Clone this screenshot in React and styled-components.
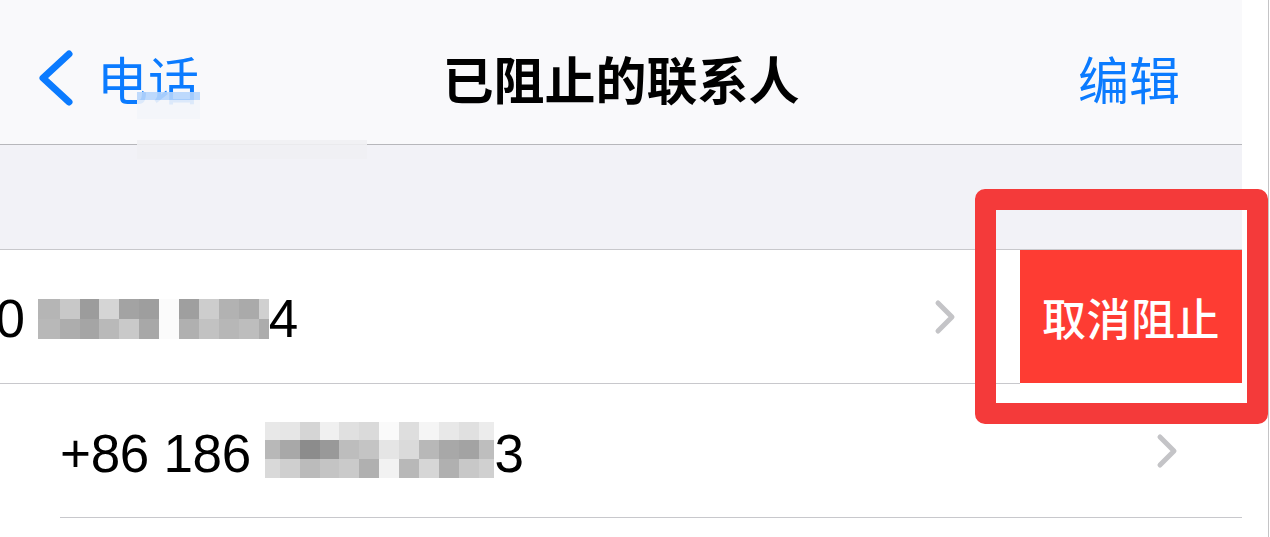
import React from "react";
import styled, { createGlobalStyle } from "styled-components";

const CJK = `"Noto Sans CJK SC", "Noto Sans", sans-serif`;

const GlobalStyle = createGlobalStyle`
  html, body {
    margin: 0;
    padding: 0;
    background: #fff;
  }
  body {
    font-family: "Liberation Sans", "Noto Sans CJK SC", sans-serif;
  }
`;

// pixelated (redacted) digits, copied tile by tile
const mosaicOne = {
  cols: "22px 20px 19px 20px 20px 20px 20px 20px 20px 20px 20px 10px",
  rows: "20px 20px",
  tiles: [
    "#b5b5b5", "#c8c8c8", "#9c9c9c", "#d5d5d5", "#a3a3a3", "#9e9e9e",
    "#fbfbfb", "#9f9f9f", "#cdcdcd", "#b2b2b2", "#aaaaaa", "#d0d0d0",
    "#b8b8b8", "#adadad", "#a5a5a5", "#b9b9b9", "#c9c9c9", "#a8a8a8",
    "#fbfbfb", "#b0b0b0", "#c2c2c2", "#b7b7b7", "#bdbdbd", "#acacac",
  ],
};

const mosaicTwo = {
  cols: "15px 20px 20px 19px 20px 20px 20px 20px 20px 20px 20px 15px",
  rows: "18px 19px 19px",
  tiles: [
    "#e8e8e8", "#e6e6e6", "#d5d5d5", "#f0f0f0", "#e0e0e0", "#dadada",
    "#fafafa", "#dedede", "#f5f5f5", "#e8e8e8", "#e0e0e0", "#ececec",
    "#b8b8b8", "#a8a8a8", "#8c8c8c", "#999999", "#bdbdbd", "#c4c4c4",
    "#e5e5e5", "#dadada", "#b8b8b8", "#a8a8a8", "#a3a3a3", "#bebebe",
    "#d9d9d9", "#cfcfcf", "#bbbbbb", "#c4c4c4", "#cacaca", "#b0b0b0",
    "#f2f2f2", "#b8b8b8", "#d6d6d6", "#b0b0b0", "#c8c8c8", "#d0d0d0",
  ],
};

const BackChevron = () => (
  <svg width="36" height="56" viewBox="0 0 36 56">
    <polyline
      points="31,4 5,28 31,52"
      fill="none"
      stroke="#0b7bff"
      strokeWidth="7"
      strokeLinecap="round"
      strokeLinejoin="round"
    />
  </svg>
);

const RowChevron = () => (
  <svg width="22" height="36" viewBox="0 0 22 36">
    <polyline
      points="4,4 18,18 4,32"
      fill="none"
      stroke="#c4c4c7"
      strokeWidth="5"
      strokeLinecap="round"
      strokeLinejoin="round"
    />
  </svg>
);

const Mosaic = ({ data, drop }) => (
  <MosaicBox $drop={drop}>
    <MosaicGrid $cols={data.cols} $rows={data.rows}>
      {data.tiles.map((c, i) => (
        <Tile key={i} $c={c} />
      ))}
    </MosaicGrid>
  </MosaicBox>
);

const App = () => {
  return (
    <Page>
      <GlobalStyle />
      <Phone>
        <NavBar>
          <Back>
            <BackChevron />
            <NavLink>电话</NavLink>
          </Back>
          <Title>已阻止的联系人</Title>
          <Edit>编辑</Edit>
        </NavBar>
        <SectionGap />
        <Row>
          <RowContent $swipe>
            <RowInner>
              <Number $spacing={-1}>
                +86 130 <Mosaic data={mosaicOne} drop={-2} />4
              </Number>
              <RowChevron />
            </RowInner>
          </RowContent>
          <UnblockButton>取消阻止</UnblockButton>
        </Row>
        <Row>
          <RowContent>
            <RowInner>
              <Number $spacing={-0.3}>
                +86 186 <Mosaic data={mosaicTwo} drop={-6} />3
              </Number>
              <RowChevron />
            </RowInner>
          </RowContent>
        </Row>
        <Smudge $x={137} $y={92} $w={63} $h={8} $c="#b6d5fc" />
        <Smudge $x={137} $y={100} $w={63} $h={19} $c="#f3f5fa" />
        <Smudge $x={137} $y={140} $w={230} $h={19} $c="#efeff3" />
      </Phone>
      <Edge />
      <Highlight />
    </Page>
  );
};

export default App;

const Page = styled.div`
  position: relative;
  display: flex;
  width: 1270px;
  height: 537px;
  overflow: hidden;
  background: #fff;
`;

const Phone = styled.div`
  position: relative;
  flex: 0 0 1242px;
  display: flex;
  flex-direction: column;
  background: #fff;
`;

const Edge = styled.div`
  flex: 0 0 26px;
  border-right: 1px solid #c4c4c6;
`;

const NavBar = styled.div`
  height: 145px;
  box-sizing: border-box;
  background: #f9f9fb;
  border-bottom: 1px solid #b7b7bb;
  display: grid;
  grid-template-columns: 1fr auto 1fr;
  align-items: start;
`;

const Back = styled.div`
  display: flex;
  align-items: center;
  gap: 23px;
  padding-left: 38px;
  margin-top: 50px;
`;

const NavLink = styled.span`
  font-family: ${CJK};
  font-size: 51px;
  line-height: 51px;
  color: #0b7bff;
`;

const Title = styled.div`
  font-family: ${CJK};
  font-size: 51px;
  line-height: 51px;
  font-weight: 600;
  color: #000;
  margin-top: 53px;
`;

const Edit = styled.div`
  justify-self: end;
  padding-right: 62px;
  margin-top: 53px;
  font-family: ${CJK};
  font-size: 51px;
  line-height: 51px;
  color: #0b7bff;
`;

const SectionGap = styled.div`
  height: 104px;
  background: #f2f2f7;
  border-bottom: 1px solid #c8c8cc;
`;

const Row = styled.div`
  display: flex;
  align-items: flex-start;
  height: 134px;
  overflow: hidden;
  background: #fff;
`;

const RowContent = styled.div`
  flex: 0 0 1242px;
  box-sizing: border-box;
  height: 134px;
  margin-left: ${(p) => (p.$swipe ? -222 : 0)}px;
  padding-left: 60px;
  display: flex;
`;

const RowInner = styled.div`
  flex: 1;
  display: flex;
  align-items: center;
  justify-content: space-between;
  padding-right: 64px;
  border-bottom: 1px solid #c8c8cc;
`;

const Number = styled.div`
  margin-top: 4px;
  font-size: 53px;
  line-height: 60px;
  letter-spacing: ${(p) => p.$spacing}px;
  color: #000;
  white-space: nowrap;
`;

const MosaicBox = styled.span`
  display: inline-block;
  overflow: hidden;
  vertical-align: ${(p) => p.$drop}px;
`;

const MosaicGrid = styled.span`
  display: grid;
  grid-template-columns: ${(p) => p.$cols};
  grid-template-rows: ${(p) => p.$rows};
`;

const Tile = styled.span`
  background: ${(p) => p.$c};
`;

const UnblockButton = styled.div`
  flex: 0 0 222px;
  height: 133px;
  background: #fe3c33;
  color: #fff;
  display: flex;
  align-items: center;
  justify-content: center;
  font-family: ${CJK};
  font-size: 44px;
  font-weight: 500;
  letter-spacing: 0.5px;
`;

const Smudge = styled.div`
  position: absolute;
  left: ${(p) => p.$x}px;
  top: ${(p) => p.$y}px;
  width: ${(p) => p.$w}px;
  height: ${(p) => p.$h}px;
  background: ${(p) => p.$c};
  opacity: 0.9;
`;

const Highlight = styled.div`
  position: absolute;
  left: 975px;
  top: 189px;
  width: 293px;
  height: 235px;
  box-sizing: border-box;
  border: 21px solid #f43a3a;
  border-radius: 10px;
  pointer-events: none;
`;
